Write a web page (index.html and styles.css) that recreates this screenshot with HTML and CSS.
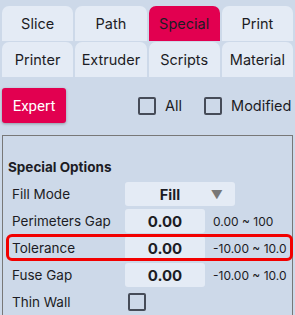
FILE: index.html
```html
<!DOCTYPE html>
<html>
<head>
<meta charset="UTF-8">
<title>Special</title>
<link rel="stylesheet" href="styles.css">
</head>
<body>
	<div class="tabs">
		<div class="tab">Slice</div>
		<div class="tab">Path</div>
		<div class="tab active">Special</div>
		<div class="tab">Print</div>
		<div class="tab">Printer</div>
		<div class="tab">Extruder</div>
		<div class="tab">Scripts</div>
		<div class="tab">Material</div>
	</div>
	<div class="bar">
		<div class="expert">Expert</div>
		<label class="check"><span class="box"></span>All</label>
		<label class="check"><span class="box"></span>Modified</label>
	</div>
	<div class="panel">
		<div class="title">Special Options</div>
		<div class="rows">
			<div class="row">
				<span class="label">Fill Mode</span>
				<span class="select"><b>Fill</b><i>&#9660;</i></span>
			</div>
			<div class="row">
				<span class="label">Perimeters Gap</span>
				<span class="input">0.00</span>
				<span class="range">0.00 ~ 100</span>
			</div>
			<div class="row hl">
				<span class="label">Tolerance</span>
				<span class="input">0.00</span>
				<span class="range">-10.00 ~ 10.0</span>
			</div>
			<div class="row">
				<span class="label">Fuse Gap</span>
				<span class="input">0.00</span>
				<span class="range">-10.00 ~ 10.0</span>
			</div>
			<div class="row">
				<span class="label">Thin Wall</span>
				<span class="box small"></span>
			</div>
		</div>
	</div>
</body>
</html>
```
FILE: styles.css
```css
body{
	margin: 0;
	background: #cdd9e9;
	font-family: Inter, "Noto Sans", sans-serif;
	color: #1c1c24;
	overflow: hidden;
}
.tabs{
	display: grid;
	grid-template-columns: repeat(4, 1fr);
	column-gap: 2px;
	row-gap: 1px;
	padding: 6px 2px 0;
}
.tab{
	height: 35px;
	background: #e4ebf5;
	border-radius: 7px 7px 0 0;
	display: flex;
	align-items: center;
	justify-content: center;
	font-size: 14.5px;
}
.tab.active{
	background: #e20050;
}
.bar{
	display: flex;
	align-items: center;
	padding: 11px 2px 0;
}
.expert{
	width: 64px;
	height: 35px;
	background: #e20050;
	color: #fff;
	border-radius: 3px;
	box-shadow: 0 1px 3px rgba(0,0,0,0.3);
	font-family: Roboto, sans-serif;
	font-size: 15px;
	display: flex;
	align-items: center;
	justify-content: center;
}
.check{
	display: flex;
	align-items: center;
	font-size: 14.5px;
}
.check:nth-of-type(1){
	margin-left: 72px;
}
.check:nth-of-type(2){
	margin-left: 22px;
}
.box{
	width: 14px;
	height: 14px;
	border: 2px solid #464c58;
	border-radius: 2px;
	margin-right: 9px;
}
.panel{
	margin: 12px 2px 0;
	border: 1px solid #787878;
	height: 180px;
}
.title{
	font-weight: bold;
	font-size: 13.5px;
	padding: 23px 0 0 5px;
	line-height: 17px;
}
.rows{
	display: flex;
	flex-direction: column;
	gap: 3px;
	padding: 6px 0 0 4px;
}
.row{
	position: relative;
	height: 24px;
	display: flex;
	align-items: center;
	font-size: 13.5px;
}
.label{
	width: 118px;
	padding-left: 5px;
	box-sizing: border-box;
}
.hl::after{
	content: "";
	position: absolute;
	left: -1px;
	right: -1px;
	top: -2px;
	bottom: -1px;
	border: 3px solid #f20000;
	border-radius: 6px;
}
.select{
	width: 110px;
	height: 24px;
	background: #e4ebf5;
	border-radius: 3px;
	display: flex;
	align-items: center;
	font-size: 14.5px;
}
.select b{
	flex: 1;
	text-align: center;
	padding-left: 4px;
}
.select i{
	font-style: normal;
	color: #777;
	font-size: 12px;
	padding-right: 12px;
}
.input{
	width: 80px;
	height: 24px;
	background: #e4ebf5;
	border-radius: 3px;
	display: flex;
	align-items: center;
	justify-content: center;
	font-weight: bold;
	font-size: 15px;
}
.range{
	font-size: 12px;
	padding-left: 8px;
}
.box.small{
	margin-left: 3px;
	width: 14px;
	height: 14px;
}
```
